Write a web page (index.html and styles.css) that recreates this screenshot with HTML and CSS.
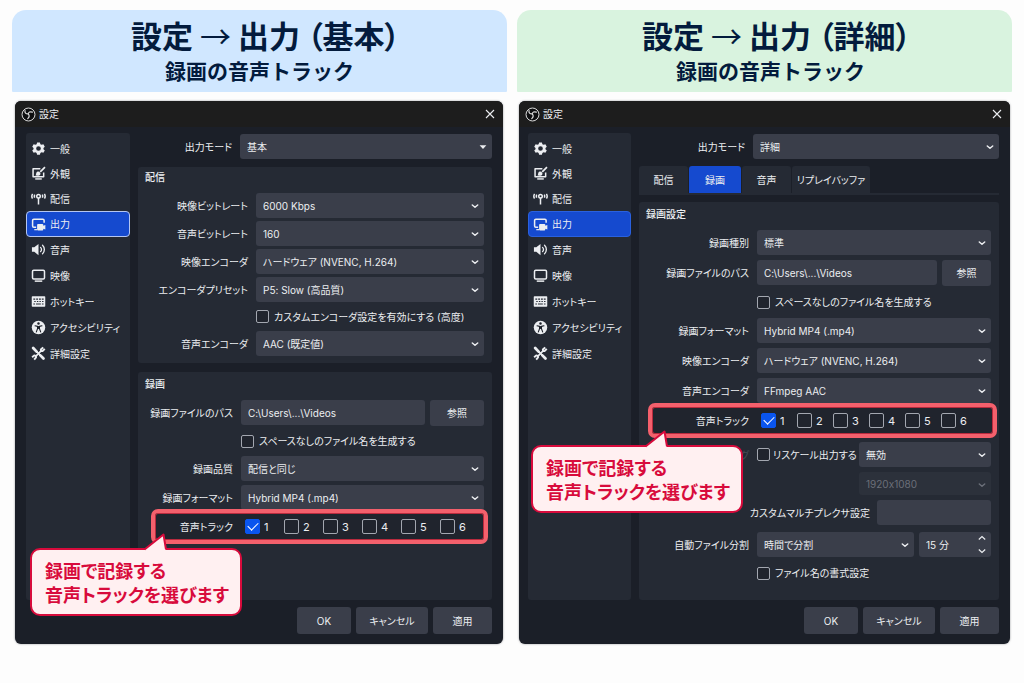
FILE: index.html
```html
<!DOCTYPE html>
<html lang="ja">
<head>
<meta charset="utf-8">
<meta name="viewport" content="width=device-width, initial-scale=1">
<title>設定 → 出力</title>
<link rel="stylesheet" href="styles.css">
</head>
<body>
<svg class="sprite" aria-hidden="true">
  <symbol id="i-app" viewBox="0 0 16 16"><circle cx="8" cy="8" r="6.900" fill="#0d0e10" stroke="#e6e6e6" stroke-width="1"/><path d="M4.300 3.900c-.5 2.200.8 3.600 3.400 3.500M7.700 7.400c.4-2 2-2.900 4.400-1.900M7.700 7.400c1.400 1.300 1.500 3.300-.5 5" fill="none" stroke="#dcdcdc" stroke-width="1.300" stroke-linecap="round"/></symbol>
  <symbol id="i-close" viewBox="0 0 12 12"><path d="M2 2l8 8M10 2l-8 8" fill="none" stroke="currentColor" stroke-width="1.100"/></symbol>
  <symbol id="i-gear" viewBox="0 0 16 16"><path fill="currentColor" fill-rule="evenodd" d="M6.500 1.500h3l.5 1.900 1.300.7 1.900-.6 1.500 2.600-1.400 1.300v1.300l1.400 1.300-1.500 2.500-1.900-.5-1.300.7-.5 1.900h-3L6 12.700l-1.300-.7-1.900.5L1.300 10l1.400-1.300V7.400L1.300 6.100l1.500-2.600 1.900.6L6 3.400zM8 5.500a2.500 2.500 0 100 5 2.500 2.500 0 000-5z"/></symbol>
  <symbol id="i-look" viewBox="0 0 16 16"><path d="M10 2.800H2.200v8.700h11.300V7" fill="none" stroke="currentColor" stroke-width="1.600" stroke-linejoin="round"/><path d="M4.500 13.800h7" stroke="currentColor" stroke-width="1.500"/><path d="M14.900 1.200L9.800 6.300" stroke="currentColor" stroke-width="1.800"/><path d="M4.300 9.900c1 .1 1-.9 1.200-2 .4-1.900 2.500-2.600 3.900-1.300 1.300 1.300.8 3.300-1.300 3.700-1.500.3-2.900.1-3.800-.4z" fill="currentColor"/></symbol>
  <symbol id="i-antenna" viewBox="0 0 16 16"><path d="M1.700 3c-1 1.500-1 3.500 0 5M14.300 3c1 1.500 1 3.500 0 5M4 3.900c-.5.900-.5 2.300 0 3.200M12 3.900c.5.900.5 2.300 0 3.200M8 7v7.500" fill="none" stroke="currentColor" stroke-width="1.600"/><circle cx="8" cy="5.700" r="1.900" fill="none" stroke="currentColor" stroke-width="1.600"/></symbol>
  <symbol id="i-output" viewBox="0 0 16 16"><path d="M5.500 11H3a1.300 1.300 0 01-1.300-1.300V3.600A1.300 1.300 0 013 2.300h9.700A1.300 1.300 0 0114 3.600V6" fill="none" stroke="currentColor" stroke-width="1.600"/><path d="M3.500 13.500h3" stroke="currentColor" stroke-width="1.300"/><path d="M6.500 8.500a1 1 0 011-1h4.600a1 1 0 011 1v.8l2.200-.9v5l-2.200-.8v.7a1 1 0 01-1 1H7.500a1 1 0 01-1-1z" fill="currentColor"/></symbol>
  <symbol id="i-sound" viewBox="0 0 16 16"><path d="M1 5.500h2.500L8 2v12l-4.500-3.500H1z" fill="currentColor"/><path d="M10.200 5.700c1.300 1.300 1.300 3.300 0 4.600M12.300 3.500c2.600 2.500 2.600 6.500 0 9" fill="none" stroke="currentColor" stroke-width="1.400" stroke-linecap="round"/></symbol>
  <symbol id="i-screen" viewBox="0 0 16 16"><rect x="1.600" y="2.400" width="12.800" height="9.400" rx="1.300" fill="none" stroke="currentColor" stroke-width="1.600"/><path d="M4 14h8" stroke="currentColor" stroke-width="1.600"/></symbol>
  <symbol id="i-keys" viewBox="0 0 16 16"><rect x=".8" y="2.500" width="14.400" height="11" rx=".8" fill="currentColor"/><path d="M2.500 5.500h2M5.500 5.500h2M8.500 5.500h2M11.500 5.500h2M3.500 8h1.500M6.300 8h1.500M9 8h1.500M11.800 8h1.500M2.500 10.700h1.800M5.300 10.700h5.200M11.600 10.700h1.800" stroke="#252a34" stroke-width="1.200"/></symbol>
  <symbol id="i-access" viewBox="0 0 16 16"><circle cx="8" cy="8" r="7.200" fill="currentColor"/><circle cx="8" cy="3.800" r="1.300" fill="#1b1f28"/><path d="M4.300 6.200l2.700.6v2.400L5.700 12.700M11.700 6.200L9 6.800v2.400l1.300 3.500" fill="none" stroke="#1b1f28" stroke-width="1.200" stroke-linecap="round" stroke-linejoin="round"/><path d="M6.500 6.500h3v3h-3z" fill="#1b1f28"/></symbol>
  <symbol id="i-tools" viewBox="0 0 16 16"><path d="M2.300 2.200l3.700 3.800M10 10l3.300 3.300" stroke="currentColor" stroke-width="3" stroke-linecap="round"/><path d="M6 6l4 4M4.500 11.500l7-7" stroke="currentColor" stroke-width="1.800"/><path d="M13 1.500l-2.500 2.300.2 1.500 1.600.2L14.700 3M1.200 12l2.300-2 1.600.5.3 1.600-2 2.500" fill="none" stroke="currentColor" stroke-width="2" stroke-linejoin="round"/></symbol>
  <symbol id="i-down" viewBox="0 0 10 10"><path d="M2.300 4L5 6.300 7.700 4" fill="none" stroke="currentColor" stroke-width="1.500" stroke-linecap="round" stroke-linejoin="round"/></symbol>
  <symbol id="i-tri" viewBox="0 0 10 10"><path d="M1.600 3.300h6.800L5 6.900z" fill="currentColor"/></symbol>
  <symbol id="i-up" viewBox="0 0 10 10"><path d="M1.800 6.500L5 3.500l3.200 3" fill="none" stroke="currentColor" stroke-width="1.200"/></symbol>
  <symbol id="i-dn" viewBox="0 0 10 10"><path d="M1.800 3.500L5 6.500l3.200-3" fill="none" stroke="currentColor" stroke-width="1.200"/></symbol>
  <symbol id="i-tail" viewBox="0 0 26 18"><path d="M2 16.500L20.500 1.500 23 16.500V18H2z" fill="#fff0f1"/><path d="M1.500 16.500L20.500 1.500 23 16.500" fill="none" stroke="#d80b3c" stroke-width="2" stroke-linejoin="round"/></symbol>
</svg>

<main class="page">
  <section class="panel">
    <header class="banner banner-blue">
      <h1>設定 <span class="arrow">→</span> 出力 （基本）</h1>
      <p>録画の音声トラック</p>
    </header>
    <div class="window">
      <div class="titlebar">
        <svg class="app"><use href="#i-app"/></svg><span>設定</span>
        <button class="close" type="button" aria-label="閉じる"><svg><use href="#i-close"/></svg></button>
      </div>
      <div class="body">
        <nav class="side">
          <button type="button"><svg><use href="#i-gear"/></svg>一般</button>
          <button type="button"><svg><use href="#i-look"/></svg>外観</button>
          <button type="button"><svg><use href="#i-antenna"/></svg>配信</button>
          <button type="button" class="current ringed"><svg><use href="#i-output"/></svg>出力</button>
          <button type="button"><svg><use href="#i-sound"/></svg>音声</button>
          <button type="button"><svg><use href="#i-screen"/></svg>映像</button>
          <button type="button"><svg><use href="#i-keys"/></svg>ホットキー</button>
          <button type="button"><svg><use href="#i-access"/></svg>アクセシビリティ</button>
          <button type="button"><svg><use href="#i-tools"/></svg>詳細設定</button>
        </nav>
        <div class="content">
          <div class="row mode">
            <label for="a-mode">出力モード</label>
            <span class="drop"><select id="a-mode"><option>基本</option></select><svg><use href="#i-tri"/></svg></span>
          </div>
          <section class="group stream">
            <h2>配信</h2>
            <div class="row"><label for="a-vb">映像ビットレート</label><span class="drop"><select id="a-vb"><option>6000 Kbps</option></select><svg><use href="#i-down"/></svg></span></div>
            <div class="row"><label for="a-ab">音声ビットレート</label><span class="drop"><select id="a-ab"><option>160</option></select><svg><use href="#i-down"/></svg></span></div>
            <div class="row"><label for="a-ve">映像エンコーダ</label><span class="drop"><select id="a-ve"><option>ハードウェア (NVENC, H.264)</option></select><svg><use href="#i-down"/></svg></span></div>
            <div class="row"><label for="a-ep">エンコーダプリセット</label><span class="drop"><select id="a-ep"><option>P5: Slow (高品質)</option></select><svg><use href="#i-down"/></svg></span></div>
            <div class="row ticks"><label class="tick"><input type="checkbox">カスタムエンコーダ設定を有効にする (高度)</label></div>
            <div class="row"><label for="a-ae">音声エンコーダ</label><span class="drop"><select id="a-ae"><option>AAC (既定値)</option></select><svg><use href="#i-down"/></svg></span></div>
          </section>
          <section class="group record">
            <h2>録画</h2>
            <div class="row"><label for="a-path">録画ファイルのパス</label><span class="pair"><input class="text" id="a-path" type="text" value="C:\Users\...\Videos"><button class="btn" type="button">参照</button></span></div>
            <div class="row ticks"><label class="tick"><input type="checkbox">スペースなしのファイル名を生成する</label></div>
            <div class="row"><label for="a-q">録画品質</label><span class="drop"><select id="a-q"><option>配信と同じ</option></select><svg><use href="#i-down"/></svg></span></div>
            <div class="row"><label for="a-f">録画フォーマット</label><span class="drop"><select id="a-f"><option>Hybrid MP4 (.mp4)</option></select><svg><use href="#i-down"/></svg></span></div>
            <div class="row tracks">
              <span class="name">音声トラック</span>
              <span class="boxes"><label><input type="checkbox" checked>1</label><label><input type="checkbox">2</label><label><input type="checkbox">3</label><label><input type="checkbox">4</label><label><input type="checkbox">5</label><label><input type="checkbox">6</label></span>
              <div class="callout"><svg><use href="#i-tail"/></svg>録画で記録する<br>音声トラックを選びます</div>
            </div>
          </section>
        </div>
      </div>
      <footer class="actions"><button class="btn ok" type="button">OK</button><button class="btn cancel" type="button">キャンセル</button><button class="btn apply" type="button">適用</button></footer>
    </div>
  </section>

  <section class="panel">
    <header class="banner banner-green">
      <h1>設定 <span class="arrow">→</span> 出力 （詳細）</h1>
      <p>録画の音声トラック</p>
    </header>
    <div class="window advanced">
      <div class="titlebar">
        <svg class="app"><use href="#i-app"/></svg><span>設定</span>
        <button class="close" type="button" aria-label="閉じる"><svg><use href="#i-close"/></svg></button>
      </div>
      <div class="body">
        <nav class="side">
          <button type="button"><svg><use href="#i-gear"/></svg>一般</button>
          <button type="button"><svg><use href="#i-look"/></svg>外観</button>
          <button type="button"><svg><use href="#i-antenna"/></svg>配信</button>
          <button type="button" class="current"><svg><use href="#i-output"/></svg>出力</button>
          <button type="button"><svg><use href="#i-sound"/></svg>音声</button>
          <button type="button"><svg><use href="#i-screen"/></svg>映像</button>
          <button type="button"><svg><use href="#i-keys"/></svg>ホットキー</button>
          <button type="button"><svg><use href="#i-access"/></svg>アクセシビリティ</button>
          <button type="button"><svg><use href="#i-tools"/></svg>詳細設定</button>
        </nav>
        <div class="content">
          <div class="row mode">
            <label for="b-mode">出力モード</label>
            <span class="drop"><select id="b-mode"><option>詳細</option></select><svg><use href="#i-down"/></svg></span>
          </div>
          <div class="tabs" role="tablist">
            <button type="button" role="tab">配信</button><button type="button" role="tab" class="on" aria-selected="true">録画</button><button type="button" role="tab">音声</button><button type="button" role="tab" class="wide">リプレイバッファ</button>
          </div>
          <section class="group settings">
            <h2>録画設定</h2>
            <div class="row"><label for="b-type">録画種別</label><span class="drop"><select id="b-type"><option>標準</option></select><svg><use href="#i-down"/></svg></span></div>
            <div class="row"><label for="b-path">録画ファイルのパス</label><span class="pair"><input class="text" id="b-path" type="text" value="C:\Users\...\Videos"><button class="btn" type="button">参照</button></span></div>
            <div class="row ticks"><label class="tick"><input type="checkbox">スペースなしのファイル名を生成する</label></div>
            <div class="row"><label for="b-f">録画フォーマット</label><span class="drop"><select id="b-f"><option>Hybrid MP4 (.mp4)</option></select><svg><use href="#i-down"/></svg></span></div>
            <div class="row"><label for="b-ve">映像エンコーダ</label><span class="drop"><select id="b-ve"><option>ハードウェア (NVENC, H.264)</option></select><svg><use href="#i-down"/></svg></span></div>
            <div class="row"><label for="b-ae">音声エンコーダ</label><span class="drop"><select id="b-ae"><option>FFmpeg AAC</option></select><svg><use href="#i-down"/></svg></span></div>
            <div class="row tracks">
              <span class="name">音声トラック</span>
              <span class="boxes"><label><input type="checkbox" checked>1</label><label><input type="checkbox">2</label><label><input type="checkbox">3</label><label><input type="checkbox">4</label><label><input type="checkbox">5</label><label><input type="checkbox">6</label></span>
              <div class="callout"><svg><use href="#i-tail"/></svg>録画で記録する<br>音声トラックを選びます</div>
            </div>
            <div class="row">
              <span class="name faded">リスケーリング</span>
              <span class="rescale"><label class="tick"><input type="checkbox">リスケール出力する</label><span class="drop"><select aria-label="リスケール"><option>無効</option></select><svg><use href="#i-down"/></svg></span></span>
            </div>
            <div class="row ticks"><span class="drop size"><select disabled aria-label="解像度"><option>1920x1080</option></select><svg><use href="#i-down"/></svg></span></div>
            <div class="muxer"><label for="b-mux">カスタムマルチプレクサ設定</label><input class="text" id="b-mux" type="text"></div>
            <div class="row split"><label for="b-split">自動ファイル分割</label><span class="pair"><span class="drop"><select id="b-split"><option>時間で分割</option></select><svg><use href="#i-down"/></svg></span><span class="spin"><input class="text" type="text" value="15 分" aria-label="分割時間"><span class="steps"><button type="button" aria-label="増やす"><svg><use href="#i-up"/></svg></button><button type="button" aria-label="減らす"><svg><use href="#i-dn"/></svg></button></span></span></span></div>
            <div class="row ticks"><label class="tick"><input type="checkbox">ファイル名の書式設定</label></div>
          </section>
        </div>
      </div>
      <footer class="actions"><button class="btn ok" type="button">OK</button><button class="btn cancel" type="button">キャンセル</button><button class="btn apply" type="button">適用</button></footer>
    </div>
  </section>
</main>
</body>
</html>
```
FILE: styles.css
```css
* { box-sizing: border-box; }

body {
  margin: 0;
  background: #fdfdfd;
  color: #eceef1;
  font: 10px/16px Inter, "Noto Sans CJK JP", sans-serif;
  font-feature-settings: "palt", "calt" 0;
}

button, input, select { font: inherit; font-feature-settings: inherit; color: inherit; margin: 0; }
button { border: 0; padding: 0; background: none; cursor: pointer; }
.sprite { display: none; }

.page {
  display: grid;
  grid-template-columns: 1fr 1fr;
  gap: 10px;
  padding: 10px 12px;
}

.banner {
  height: 82px;
  padding-top: 4px;
  border-radius: 14px 14px 1px 1px;
  color: #031b3d;
  text-align: center;
  font-family: "Noto Sans CJK JP", sans-serif;
}
.banner-blue { background: #d0e7ff; }
.banner-green { padding-left: 12px; background: #d9f3df; }
.banner h1 { margin: 0; padding-left: 12px; font-size: 31px; line-height: 42px; font-weight: 700; }
.arrow { font-weight: 400; }
.banner p { margin: 0; font-size: 21px; line-height: 28px; font-weight: 700; font-feature-settings: normal; }

.window {
  margin: 9px 4px 0 3px;
  border-radius: 6px;
  background: #1b1f28;
  box-shadow: 0 0 2px rgba(20, 24, 32, 0.5);
}
.window.advanced { margin: 9px 2px 0; }

.titlebar {
  display: flex;
  align-items: center;
  gap: 3px;
  height: 26px;
  padding: 0 7px 0 6px;
  border-radius: 6px 6px 0 0;
  background: #1d1d1d;
}
.app { width: 15px; height: 15px; }
.close { margin-left: auto; width: 12px; height: 12px; }
.close svg { display: block; width: 12px; height: 12px; }

.body {
  display: grid;
  grid-template-columns: 104px minmax(0, 1fr);
  gap: 8px;
  min-height: 473px;
  padding: 6px 11px 0;
}
.advanced .body { grid-template-columns: 103px minmax(0, 1fr); padding-left: 9px; }

.side {
  display: flex;
  flex-direction: column;
  padding-top: 3px;
  border-radius: 3px;
  background: #252a34;
}
.side button {
  display: flex;
  align-items: center;
  gap: 4px;
  height: 25px;
  padding-left: 4px;
  border: 1px solid transparent;
  border-radius: 4px;
}
.side button:nth-child(n+5) { margin-bottom: 1px; }
.side button svg { width: 15px; height: 15px; flex: none; }
.side button.current { height: 26px; background: #154acf; border-color: #2a61df; }
.side button.ringed { border-color: #b4c6f2; }

.content { display: flex; flex-direction: column; min-width: 0; }

.row {
  display: grid;
  grid-template-columns: var(--label) minmax(0, 1fr);
  gap: 8px;
  align-items: center;
}
.row > label, .row > .name { text-align: right; white-space: nowrap; }
.row > .tick { grid-column: 2; text-align: left; }
.mode { --label: 94px; padding-top: 1px; }
.advanced .mode { --label: 106px; }

.group {
  display: flex;
  flex-direction: column;
  padding: 0 8px 7px 0;
  border-radius: 3px;
  background: #252a34;
}
.group h2 { margin: 0; padding-left: 7px; font-size: 10px; line-height: 20px; font-weight: 500; }
.stream { --label: 110px; margin-top: 8px; gap: 3px; }
.stream h2 { margin-bottom: 3px; }
.record { --label: 95px; flex: 1; margin-top: 9px; gap: 4px; }
.record h2 { padding-top: 2px; margin-bottom: 2px; }
.settings { --label: 110px; flex: 1; gap: 5px; }
.settings h2 { padding-top: 2px; margin-bottom: 1px; }

.drop { position: relative; display: block; min-width: 0; }
.drop select, .text {
  display: block;
  width: 100%;
  height: 25px;
  padding: 0 20px 0 7px;
  border: 0;
  border-radius: 3px;
  background: #3a3e4a;
  appearance: none;
}
.drop svg { position: absolute; right: 4px; top: 8px; width: 10px; height: 10px; pointer-events: none; }
.drop select:disabled { height: 23px; background: #2c313b; color: #6b6f79; opacity: 1; }
.drop select:disabled + svg { color: #6b6f79; }

.btn { height: 27px; border-radius: 3px; background: #3a3e4a; }
.pair { display: flex; gap: 5px; }
.pair .text, .pair .drop { flex: 1; min-width: 0; }
.pair .btn { width: 54px; height: 26px; }
.advanced .pair .btn { width: 49px; }
.pair .text { padding-right: 7px; }

.tick { display: flex; align-items: center; gap: 5px; min-height: 23px; white-space: nowrap; }
.record .tick, .settings .tick { min-height: 22px; }
input[type="checkbox"] {
  appearance: none;
  flex: none;
  width: 13px;
  height: 13px;
  border: 1px solid #a3a7b0;
  border-radius: 2px;
  background: #20242d;
}

.tracks { position: relative; }
.tracks::before {
  content: "";
  position: absolute;
  inset: -5px -4px -5px 13px;
  border: 4px solid #f4606c;
  border-radius: 7px;
  box-shadow: inset 0 0 0 1px #b92b3e;
  background: #20242d;
}
.settings .tracks::before { inset: -5px -6px -5px 9px; }
.tracks .name, .boxes { position: relative; }
.boxes {
  display: grid;
  grid-template-columns: repeat(6, 39px);
  padding-left: 4px;
  font-size: 11px;
}
.settings .tracks { margin-bottom: 4px; }
.settings .boxes { grid-template-columns: repeat(6, 36px); }
.boxes label { display: flex; align-items: center; gap: 4px; height: 25px; }
.boxes input[type="checkbox"] { width: 15px; height: 15px; }
.boxes input[type="checkbox"]:checked { display: grid; place-items: center; background: #0a55ee; border-color: #0a55ee; }
.boxes input:checked::before {
  content: "";
  width: 9px;
  height: 5px;
  margin-bottom: 3px;
  border: solid #fff;
  border-width: 0 0 1px 1px;
  rotate: -45deg;
}

.callout {
  position: absolute;
  z-index: 2;
  top: 34px;
  left: -108px;
  width: 212px;
  padding: 8px 0 8px 13px;
  border: 2px solid #d80b3c;
  border-radius: 10px;
  background: #fff0f1;
  color: #d80b3c;
  font: 700 18px/24px "Noto Sans CJK JP", sans-serif;
  font-feature-settings: "palt";
  white-space: nowrap;
}
.callout svg { position: absolute; left: 111px; top: -17px; width: 26px; height: 18px; }
.settings .callout { top: 37px; }

.tabs { display: flex; gap: 1px; margin: 7px 0; border-bottom: 2px solid #252a34; }
.tabs button { width: 49px; height: 27px; border-radius: 3px 3px 0 0; background: #252a34; }
.tabs .on { width: 52px; background: #154acf; }
.tabs .wide { width: 78px; }

.faded { color: #454a55; }
.rescale { display: grid; grid-template-columns: 94px minmax(0, 1fr); gap: 8px; }
.rescale .tick { gap: 3px; }
.size { grid-column: 2; margin-left: 102px; }
.muxer { display: grid; grid-template-columns: 231px minmax(0, 1fr); gap: 7px; align-items: center; text-align: right; }
.split { margin-top: 2px; }
.spin { display: grid; grid-template-columns: 1fr 18px; width: 72px; border-radius: 3px; background: #3a3e4a; }
.spin .text { background: none; padding-right: 0; }
.steps { display: grid; grid-template-rows: 1fr 1fr; }
.steps svg { display: block; width: 10px; height: 10px; margin: 0 auto; }

.actions { display: flex; justify-content: flex-end; gap: 5px; padding: 7px 11px 10px; }
.ok { width: 54px; }
.cancel { width: 72px; }
.apply { width: 59px; }
```
